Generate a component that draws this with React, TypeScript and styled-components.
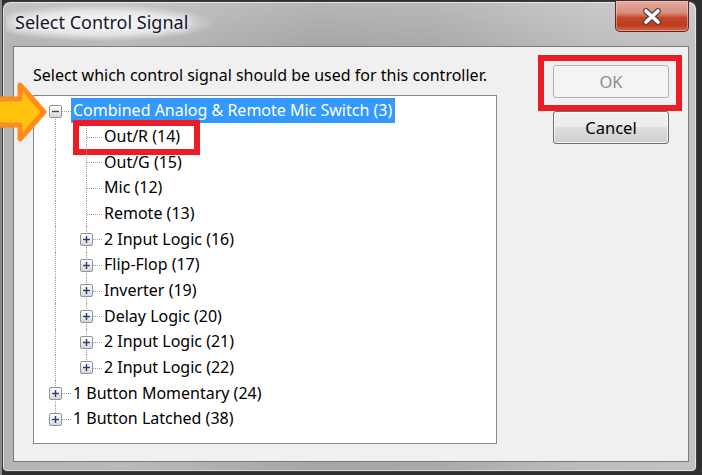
import React from "react";
import styled, { createGlobalStyle } from "styled-components";

const GlobalStyle = createGlobalStyle`
  html, body {
    margin: 0;
    padding: 0;
  }
  body {
    width: 702px;
    height: 475px;
    overflow: hidden;
    background: #4a4a4a;
    font-family: "Noto Sans", "Open Sans", sans-serif;
  }
`;

const Screen = styled.div`
  position: relative;
  width: 702px;
  height: 475px;
  box-sizing: border-box;
  padding: 1px 5px 3px 2px;
  background: linear-gradient(90deg, #8a8a8a 0, #8a8a8a 2px, #303030 2px, #303030 100%);
`;

const Window = styled.div`
  height: 100%;
  box-sizing: border-box;
  border: 1px solid #3e3e3e;
  border-radius: 8px 8px 5px 5px;
  background:
    linear-gradient(180deg, rgba(255, 255, 255, 0.18) 0, rgba(255, 255, 255, 0) 44px),
    linear-gradient(90deg, #b4b4b4 0%, #b9b9b9 18%, #a6a6a6 45%, #a9a9a9 62%, #bdbdbd 85%, #c2c2c2 100%);
  box-shadow: inset 0 0 0 1px rgba(255, 255, 255, 0.55);
  display: flex;
  flex-direction: column;
`;

const TitleBar = styled.div`
  height: 44px;
  flex: none;
  display: flex;
  justify-content: space-between;
  align-items: flex-start;
  padding-left: 3px;
`;

const Title = styled.div`
  margin-top: 3px;
  padding: 5px 26px 7px 9px;
  font-size: 18px;
  line-height: 24px;
  color: #15152e;
  background: radial-gradient(ellipse at 45% 50%, rgba(255, 255, 255, 0.9) 0%, rgba(255, 255, 255, 0.6) 45%, rgba(255, 255, 255, 0) 72%);
  text-shadow: 0 0 6px #fff, 0 0 10px #fff;
`;

const CloseButton = styled.div`
  width: 74px;
  height: 31px;
  margin-top: -1px;
  margin-right: 7px;
  box-sizing: border-box;
  border: 1px solid #5e2a22;
  border-top: none;
  border-radius: 0 0 5px 5px;
  background: linear-gradient(180deg, #e6aa9c 0%, #d98d7c 40%, #c4492d 55%, #c0391c 80%, #d3684e 100%);
  box-shadow: inset 0 0 0 1px rgba(255, 220, 210, 0.45);
  display: flex;
  align-items: center;
  justify-content: center;
`;

const Client = styled.div`
  flex: 1;
  margin: 0 7px 9px 10px;
  border: 1px solid #7a7a7a;
  background: #f0f0f0;
  display: flex;
  justify-content: space-between;
  padding: 18px 19px 17px 19px;
`;

const MainColumn = styled.div`
  width: 464px;
  display: flex;
  flex-direction: column;
`;

const Prompt = styled.div`
  height: 20px;
  line-height: 20px;
  font-size: 16px;
  color: #000;
  margin-bottom: 10px;
`;

const TreeBox = styled.div`
  flex: 1;
  border: 1px solid #828790;
  background: #fff;
  padding: 2px 0 0 6px;
`;

const Row = styled.div`
  position: relative;
  height: 25.67px;
  display: flex;
  align-items: stretch;
`;

const Guide = styled.div<{ $line: boolean }>`
  position: relative;
  width: 31px;
  flex: none;
  &::before {
    content: "";
    display: ${(p) => (p.$line ? "block" : "none")};
    position: absolute;
    left: 15px;
    top: 0;
    bottom: 0;
    border-left: 1px dotted #a0a0a0;
  }
`;

const Branch = styled.div<{ $up: boolean; $down: boolean }>`
  position: relative;
  width: 31px;
  flex: none;
  display: flex;
  align-items: center;
  justify-content: center;
  &::before {
    content: "";
    position: absolute;
    left: 15px;
    top: ${(p) => (p.$up ? "0" : "13px")};
    bottom: ${(p) => (p.$down ? "0" : "calc(100% - 13px)")};
    border-left: 1px dotted #a0a0a0;
  }
  &::after {
    content: "";
    position: absolute;
    left: 16px;
    right: 0;
    top: 13px;
    border-top: 1px dotted #a0a0a0;
  }
`;

const Expander = styled.div`
  position: relative;
  z-index: 1;
  width: 13px;
  height: 13px;
  margin-top: 1px;
  box-sizing: border-box;
  border: 1px solid #939393;
  border-radius: 2px;
  background: linear-gradient(180deg, #ffffff 0%, #f2f2f2 45%, #d6d6d6 100%);
  display: flex;
  align-items: center;
  justify-content: center;
`;

const Label = styled.div<{ $selected?: boolean }>`
  display: flex;
  align-items: center;
  padding: 0 3px 0 2px;
  margin-bottom: 1px;
  font-size: 16px;
  white-space: nowrap;
  color: ${(p) => (p.$selected ? "#fff" : "#000")};
  background: ${(p) => (p.$selected ? "#3399ff" : "transparent")};
`;

const RedMark = styled.div`
  position: absolute;
  left: 33px;
  top: -4px;
  width: 127px;
  height: 35px;
  box-sizing: border-box;
  border: 6px solid #ed1c24;
  pointer-events: none;
`;

const ButtonColumn = styled.div`
  display: flex;
  flex-direction: column;
  gap: 13px;
`;

const Marked = styled.div`
  position: relative;
`;

const RedFrame = styled.div`
  position: absolute;
  top: -10px;
  left: -15px;
  right: -13px;
  bottom: -13px;
  border: 6px solid #ed1c24;
  pointer-events: none;
`;

const DialogButton = styled.button`
  width: 116px;
  height: 33px;
  font-family: inherit;
  font-size: 16.5px;
  color: #000;
  border: 1px solid #707070;
  border-radius: 3px;
  background: linear-gradient(180deg, #f2f2f2 0%, #ebebeb 50%, #dddddd 50%, #cfcfcf 100%);
  box-shadow: inset 0 0 0 1px rgba(255, 255, 255, 0.7);
  padding: 0;
  &:disabled {
    color: #8d8d8d;
    border-color: #adb2b5;
    background: #f4f4f4;
    box-shadow: none;
  }
`;

const Pointer = styled.svg`
  position: absolute;
  left: 0;
  top: 82px;
`;

type TreeNode = {
  label: string;
  children?: TreeNode[];
  expanded?: boolean;
  selected?: boolean;
  marked?: boolean;
};

const collapsed = (label: string): TreeNode => ({ label, children: [{ label: "" }] });

const tree: TreeNode[] = [
  {
    label: "Combined Analog & Remote Mic Switch (3)",
    expanded: true,
    selected: true,
    children: [
      { label: "Out/R (14)", marked: true },
      { label: "Out/G (15)" },
      { label: "Mic (12)" },
      { label: "Remote (13)" },
      collapsed("2 Input Logic (16)"),
      collapsed("Flip-Flop (17)"),
      collapsed("Inverter (19)"),
      collapsed("Delay Logic (20)"),
      collapsed("2 Input Logic (21)"),
      collapsed("2 Input Logic (22)"),
    ],
  },
  collapsed("1 Button Momentary (24)"),
  collapsed("1 Button Latched (38)"),
];

type FlatRow = { node: TreeNode; guides: boolean[]; isLast: boolean; isFirst: boolean };

function flatten(nodes: TreeNode[], guides: boolean[] = []): FlatRow[] {
  return nodes.flatMap((node, i) => {
    const isLast = i === nodes.length - 1;
    const row: FlatRow = { node, guides, isLast, isFirst: guides.length === 0 && i === 0 };
    const kids = node.expanded && node.children ? flatten(node.children, [...guides, !isLast]) : [];
    return [row, ...kids];
  });
}

function Sign({ open }: { open: boolean }) {
  return (
    <svg width="9" height="9" viewBox="0 0 9 9">
      <path d="M1 4.5h7" stroke={open ? "#4a4a4a" : "#1f3c88"} strokeWidth="1.4" />
      {!open && <path d="M4.5 1v7" stroke="#1f3c88" strokeWidth="1.4" />}
    </svg>
  );
}

function CloseGlyph() {
  return (
    <svg width="20" height="17" viewBox="0 0 20 17">
      <path d="M4 3l12 11M16 3L4 14" stroke="#4b4b4b" strokeWidth="6" strokeLinecap="round" />
      <path d="M4 3l12 11M16 3L4 14" stroke="#fff" strokeWidth="3.6" strokeLinecap="round" />
    </svg>
  );
}

function ArrowPointer() {
  return (
    <Pointer width="48" height="60" viewBox="0 0 48 60">
      <path d="M-4 17h24V3l24 27-24 27V43H-4z" fill="#ffc20f" stroke="#ff8a1e" strokeWidth="5" strokeLinejoin="round" />
    </Pointer>
  );
}

export default function App() {
  const rows = flatten(tree);
  return (
    <>
      <GlobalStyle />
      <Screen>
        <Window>
          <TitleBar>
            <Title>Select Control Signal</Title>
            <CloseButton>
              <CloseGlyph />
            </CloseButton>
          </TitleBar>
          <Client>
            <MainColumn>
              <Prompt>Select which control signal should be used for this controller.</Prompt>
              <TreeBox>
                {rows.map((r, i) => {
                  const hasKids = !!r.node.children?.length;
                  return (
                    <Row key={i}>
                      {r.guides.map((g, j) => (
                        <Guide key={j} $line={g} />
                      ))}
                      <Branch $up={!r.isFirst} $down={!r.isLast}>
                        {hasKids && (
                          <Expander>
                            <Sign open={!!r.node.expanded} />
                          </Expander>
                        )}
                      </Branch>
                      <Label $selected={r.node.selected}>{r.node.label}</Label>
                      {r.node.marked && <RedMark />}
                    </Row>
                  );
                })}
              </TreeBox>
            </MainColumn>
            <ButtonColumn>
              <Marked>
                <DialogButton disabled>OK</DialogButton>
                <RedFrame />
              </Marked>
              <DialogButton>Cancel</DialogButton>
            </ButtonColumn>
          </Client>
        </Window>
        <ArrowPointer />
      </Screen>
    </>
  );
}
